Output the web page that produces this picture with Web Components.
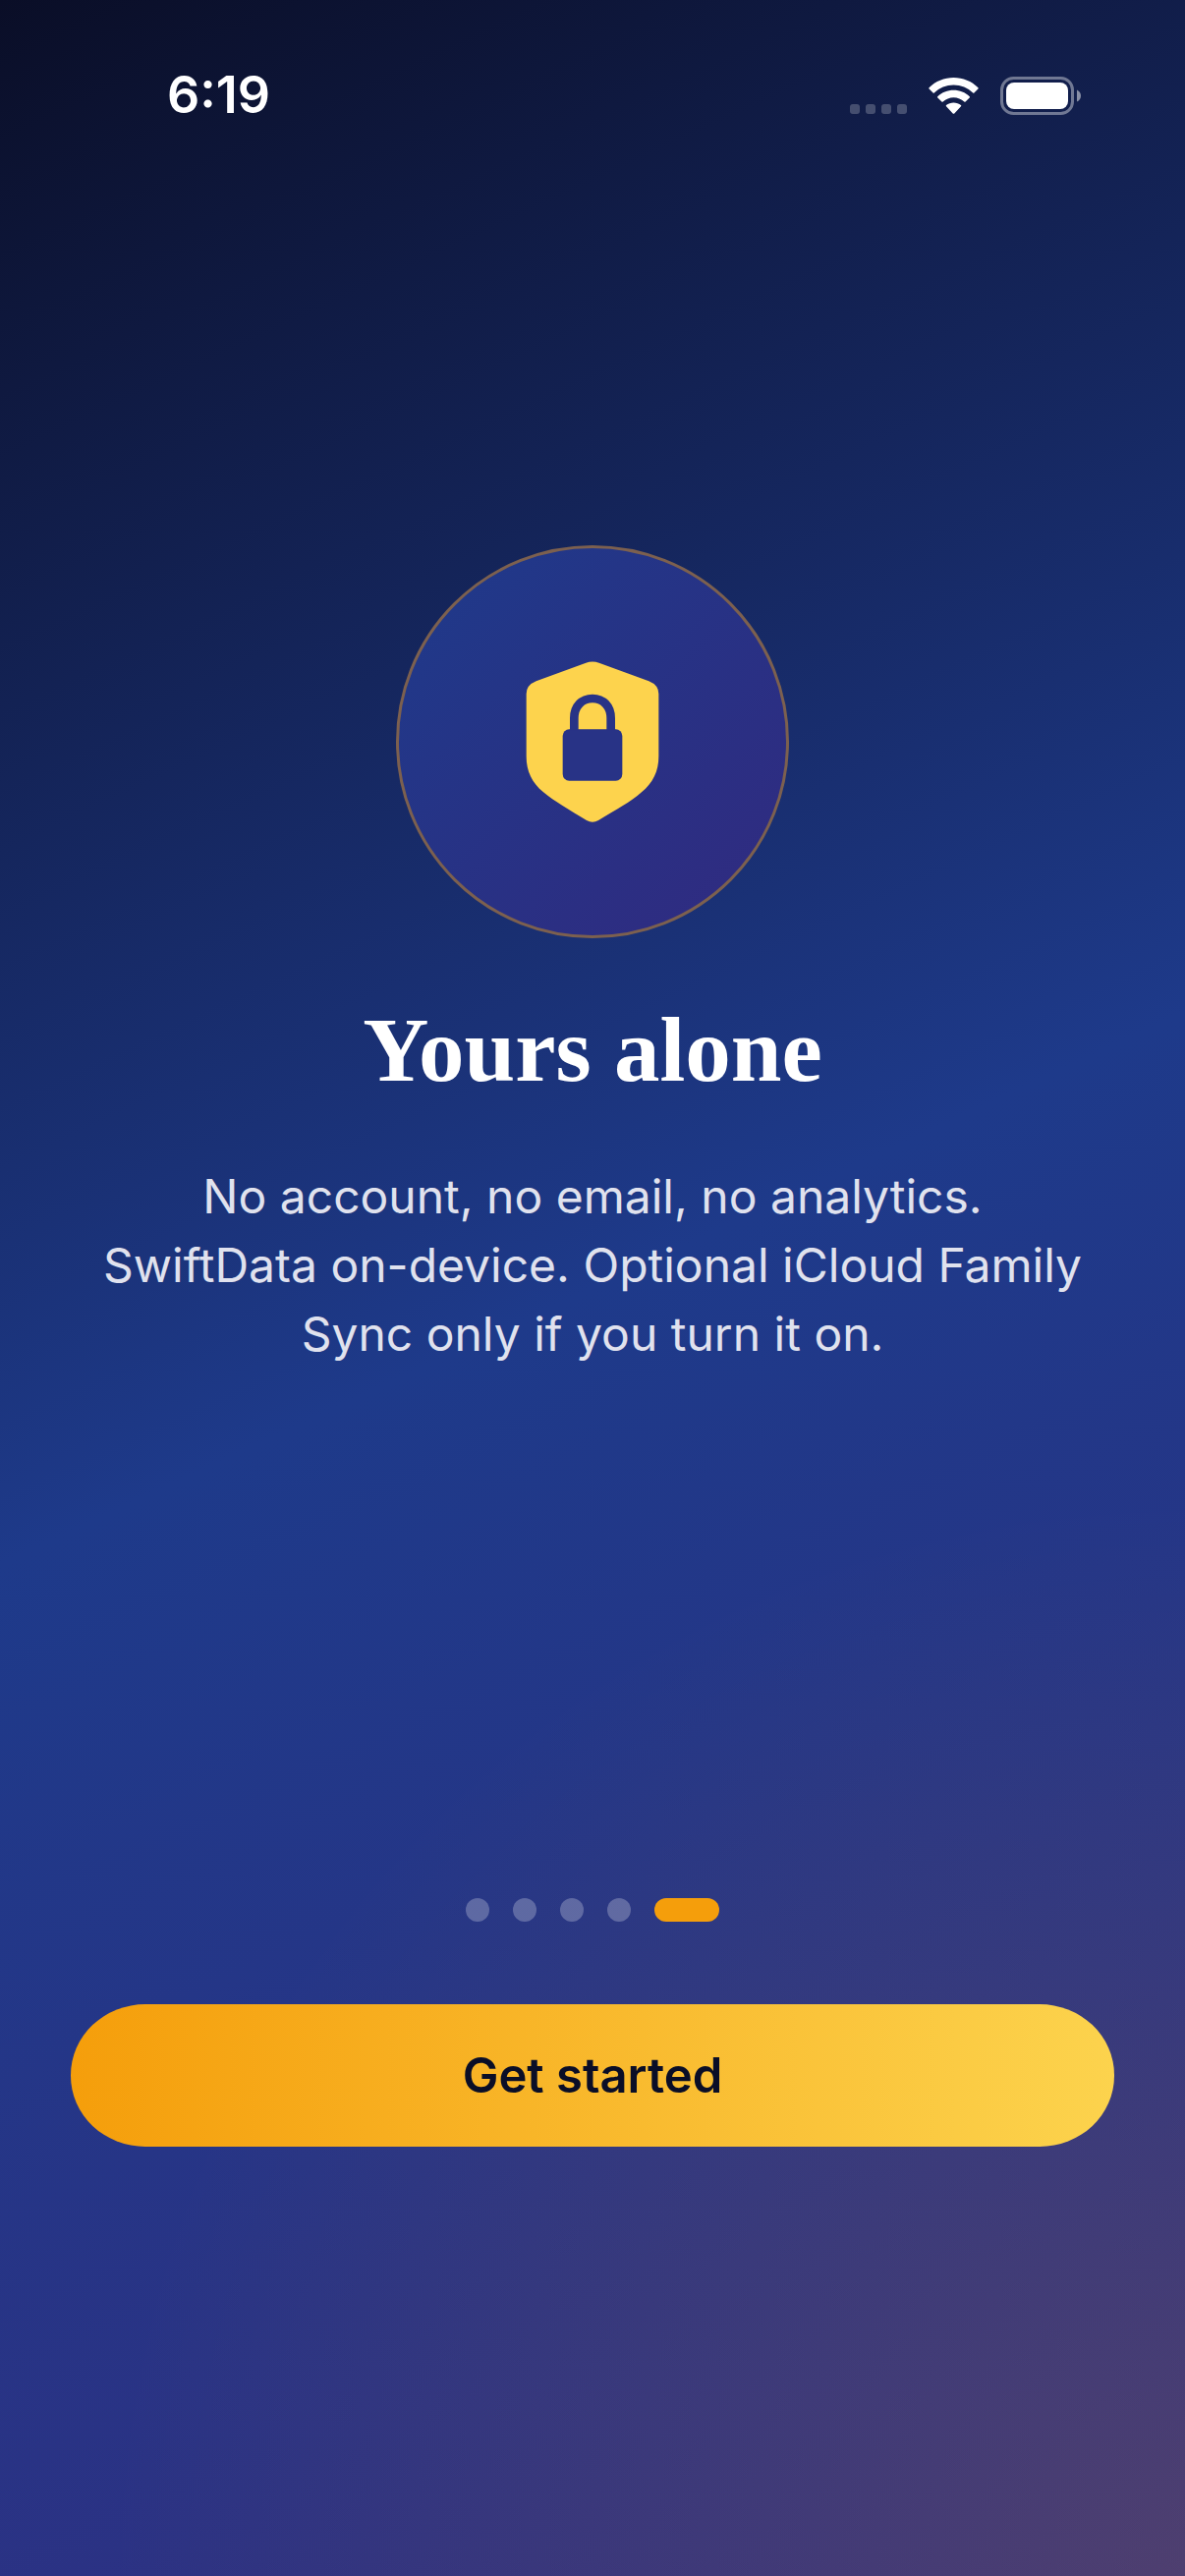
<!DOCTYPE html>
<html lang="en">
<head>
<meta charset="utf-8">
<meta name="viewport" content="width=device-width, initial-scale=1">
<title>Welcome</title>
<style>
  html,
  body {
    margin: 0;
    min-height: 100%;
    background: #0a0e27;
  }
</style>
</head>
<body>
<onboarding-screen>
  <status-bar slot="status" time="6:19"></status-bar>
  <onboarding-page heading="Yours alone">
    <shield-badge slot="art"></shield-badge>
    No account, no email, no analytics. SwiftData on-device. Optional iCloud Family Sync only if you turn it on.
  </onboarding-page>
  <page-dots slot="footer" count="5" current="5"></page-dots>
  <primary-button slot="footer">Get started</primary-button>
</onboarding-screen>

<script>
const screenTemplate = document.createElement("template");

screenTemplate.innerHTML = `
  <style>
    :host {
      display: flex;
      flex-direction: column;
      min-height: 100vh;
      box-sizing: border-box;
      color: #ffffff;
      font-family: Inter, "Liberation Sans", sans-serif;
      background:
        radial-gradient(circle 1100px at 100% 100%, rgba(245, 158, 11, 0.15), rgba(245, 158, 11, 0)),
        linear-gradient(155deg, #0a0e27 0%, #1e3a8a 50%, #312e81 100%);
    }

    main {
      display: flex;
      flex: 1;
      flex-direction: column;
      justify-content: center;
      padding: 0 96px;
    }

    footer {
      display: flex;
      flex-direction: column;
      gap: 84px;
      padding: 170px 72px 437px;
    }
  </style>
  <slot name="status"></slot>
  <main><slot></slot></main>
  <footer><slot name="footer"></slot></footer>
`;

class OnboardingScreen extends HTMLElement {
  constructor() {
    super();
    this.attachShadow({ mode: "open" }).appendChild(screenTemplate.content.cloneNode(true));
  }
}

const statusBarTemplate = document.createElement("template");

statusBarTemplate.innerHTML = `
  <style>
    :host {
      display: flex;
      align-items: center;
      justify-content: space-between;
      height: 186px;
      padding: 8px 106px 0 170px;
      box-sizing: border-box;
    }

    .time {
      font-weight: 600;
      font-size: 52px;
      line-height: 60px;
    }

    .indicators {
      display: flex;
      align-items: center;
      gap: 22px;
    }

    svg {
      display: block;
      fill: #ffffff;
    }
  </style>
  <div class="time"></div>
  <div class="indicators">
    <svg width="58" height="39" viewBox="0 0 58 39" opacity="0.22" aria-hidden="true">
      <rect x="0" y="28" width="10" height="10" rx="3"/>
      <rect x="16" y="28" width="10" height="10" rx="3"/>
      <rect x="32" y="28" width="10" height="10" rx="3"/>
      <rect x="48" y="28" width="10" height="10" rx="3"/>
    </svg>
    <svg width="51" height="39" viewBox="0 -1 51 39" aria-hidden="true">
      <path d="M.5 10.2C7.200 3.700 16 0 25.500 0S43.800 3.700 50.500 10.200Q51 11 50.400 11.600L46.400 15.600Q45.800 16 45.200 15.500C39.800 10.500 33 7.600 25.500 7.600S11.200 10.500 5.800 15.500Q5.200 16 4.600 15.600L.6 11.600Q0 11 .5 10.200Z"/>
      <path d="M9.200 19.200C13.600 15 19.300 12.700 25.500 12.700S37.400 15 41.800 19.200Q42.300 19.900 41.700 20.500L37.600 24.600Q37 25.100 36.300 24.600C33.400 21.900 29.600 20.300 25.500 20.300S17.600 21.900 14.700 24.600Q14 25.100 13.400 24.600L9.300 20.500Q8.700 19.900 9.200 19.200Z"/>
      <path d="M18 28C20.100 26.300 22.700 25.400 25.500 25.400S30.900 26.300 33 28Q33.600 28.700 33 29.300L26.300 36.400Q25.500 37.200 24.700 36.400L18 29.300Q17.400 28.700 18 28Z"/>
    </svg>
    <svg width="82" height="39" viewBox="0 0 82 39" aria-hidden="true">
      <rect x="1.500" y="1.500" width="72" height="36" rx="12" fill="none" stroke="#ffffff" stroke-width="3" opacity="0.4"/>
      <path d="M78 13.500Q82 15.500 82 19.500T78 25.500Z" opacity="0.5"/>
      <rect x="6" y="6" width="63" height="27" rx="8"/>
    </svg>
  </div>
`;

class StatusBar extends HTMLElement {
  constructor() {
    super();
    this.attachShadow({ mode: "open" }).appendChild(statusBarTemplate.content.cloneNode(true));
  }

  connectedCallback() {
    this.shadowRoot.querySelector(".time").textContent = this.getAttribute("time");
  }
}

const badgeTemplate = document.createElement("template");

badgeTemplate.innerHTML = `
  <style>
    :host {
      display: grid;
      place-items: center;
      width: 400px;
      height: 400px;
      box-sizing: border-box;
      border: 3px solid #7c604f;
      border-radius: 50%;
      background: linear-gradient(135deg, #1e3a8a, #312a80) border-box;
    }

    svg {
      display: block;
      width: 136px;
      height: 164px;
    }
  </style>
  <svg viewBox="436 400 408 492" aria-hidden="true">
    <path fill="#fdd34d" d="M620 405Q640 398 660 405L812 461Q842 473 842 500V690C842 738 824 770 790 800C756 830 712 854 658 886Q640 896 622 886C568 854 524 828 490 800C456 770 438 738 438 690V500Q438 473 468 461Z"/>
    <rect x="549" y="608" width="182" height="157" rx="20" fill="#283386"/>
    <path fill="none" stroke="#283386" stroke-width="26" d="M584 612V574C584 537 608 514 640 514S696 537 696 574V612"/>
  </svg>
`;

class ShieldBadge extends HTMLElement {
  constructor() {
    super();
    this.attachShadow({ mode: "open" }).appendChild(badgeTemplate.content.cloneNode(true));
  }
}

const pageTemplate = document.createElement("template");

pageTemplate.innerHTML = `
  <style>
    :host {
      display: flex;
      flex-direction: column;
      align-items: center;
      text-align: center;
    }

    h1 {
      margin: 60px 0 0;
      font: 700 93px/108px "Liberation Serif", serif;
    }

    p {
      margin: 60px 0 0;
      color: #e0e2ee;
      font-size: 48px;
      line-height: 70px;
    }
  </style>
  <slot name="art"></slot>
  <h1></h1>
  <p><slot></slot></p>
`;

class OnboardingPage extends HTMLElement {
  constructor() {
    super();
    this.attachShadow({ mode: "open" }).appendChild(pageTemplate.content.cloneNode(true));
  }

  connectedCallback() {
    this.shadowRoot.querySelector("h1").textContent = this.getAttribute("heading");
  }
}

const dotsTemplate = document.createElement("template");

dotsTemplate.innerHTML = `
  <style>
    :host {
      display: flex;
      justify-content: center;
      gap: 24px;
    }

    span {
      width: 24px;
      height: 24px;
      border-radius: 12px;
      background: rgba(255, 255, 255, 0.25);
    }

    .current {
      width: 66px;
      background: #f59e0b;
    }
  </style>
`;

class PageDots extends HTMLElement {
  constructor() {
    super();
    this.attachShadow({ mode: "open" }).appendChild(dotsTemplate.content.cloneNode(true));
  }

  connectedCallback() {
    const count = Number(this.getAttribute("count"));
    const current = Number(this.getAttribute("current"));
    for (let i = 1; i <= count; i++) {
      const dot = document.createElement("span");
      dot.classList.toggle("current", i === current);
      this.shadowRoot.appendChild(dot);
    }
  }
}

const buttonTemplate = document.createElement("template");

buttonTemplate.innerHTML = `
  <style>
    :host {
      display: block;
    }

    button {
      display: block;
      width: 100%;
      height: 145px;
      padding: 0;
      border: 0;
      border-radius: 76px / 72px;
      background: linear-gradient(90deg, #f59e0b, #fcd34d);
      color: #0a0e27;
      font: 600 49px/60px Inter, "Liberation Sans", sans-serif;
      cursor: pointer;
    }
  </style>
  <button type="button"><slot></slot></button>
`;

class PrimaryButton extends HTMLElement {
  constructor() {
    super();
    this.attachShadow({ mode: "open" }).appendChild(buttonTemplate.content.cloneNode(true));
  }
}

customElements.define("onboarding-screen", OnboardingScreen);
customElements.define("status-bar", StatusBar);
customElements.define("shield-badge", ShieldBadge);
customElements.define("onboarding-page", OnboardingPage);
customElements.define("page-dots", PageDots);
customElements.define("primary-button", PrimaryButton);
</script>
</body>
</html>
